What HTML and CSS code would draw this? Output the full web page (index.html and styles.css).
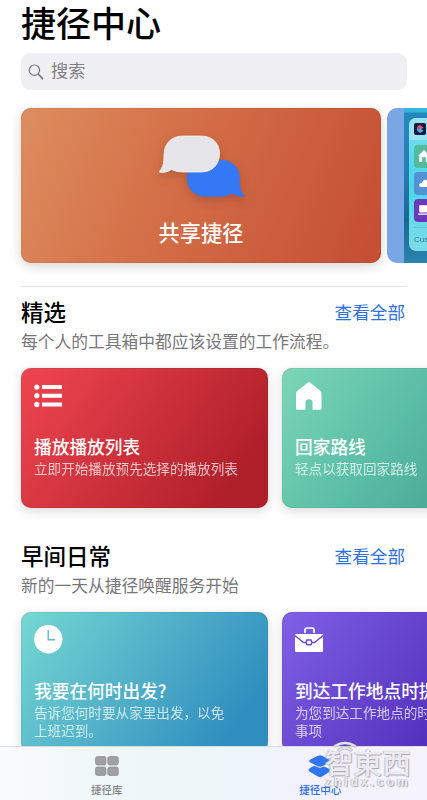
FILE: index.html
```html
<!DOCTYPE html>
<html lang="zh-CN">
<head>
<meta charset="utf-8">
<title>捷径中心</title>
<link rel="stylesheet" href="styles.css">
</head>
<body>
<div class="app">
  <main class="content">
    <h1 class="title">捷径中心</h1>
    <div class="search">
      <svg width="16" height="16" viewBox="0 0 16 16" fill="none" stroke="#77777b" stroke-width="1.2" stroke-linecap="round"><circle cx="6.4" cy="6.2" r="5.2"/><path d="M10.2 10 14.6 14.6" stroke-width="1.6"/></svg>
      <span>搜索</span>
    </div>

    <div class="heroes">
      <article class="hero">
        <svg class="bubbles" width="88" height="64" viewBox="0 0 88 64">
          <path d="M46 25H62C73 25 80.500 33 80.500 43C80.500 52 81 57 86 61.500C80 62 76 60 73.500 58.500Q67 61.500 61 61.500H47C36 61.500 28 54 28 43C28 32 36 25 46 25Z" fill="#3478f6" stroke="#5276c9" stroke-width=".7"/>
          <path d="M24 1H42C53 1 60.500 8 60.500 18.500C60.500 30 53 37 42 37H24Q17 37 12.500 34.500C9 37 4 38 0 37C4 32 5 29 5 20C5 8 13 1 24 1Z" fill="#e5e5ea" stroke="#fff3ee" stroke-width=".8"/>
        </svg>
        <h2 class="hero-label">共享捷径</h2>
      </article>
      <article class="preview">
        <div class="phone">
          <div class="widget">
            <div class="widget-head">
              <svg width="12" height="12" viewBox="0 0 12 12"><rect width="12" height="12" rx="2" fill="#141c48"/><path d="M5.500 2 9.500 4.500 7 6.500 3 4Z" fill="#ed5268"/><path d="M6.500 5.500 9.500 7.700 6 10 3 7.500Z" fill="#45b8d8"/><path d="M3 4 6 6 3 7.500Z" fill="#ac71df"/></svg>
            </div>
            <div class="tiles">
              <span class="tile green"><svg width="12" height="12" viewBox="0 0 10 10"><path d="M0 5 5 0 10 5H9V10H6.500V6H3.500V10H1V5Z" fill="#fff"/></svg></span>
              <span class="tile blue"><svg width="14" height="8" viewBox="0 0 12 8"><path d="M2 8Q0 8 0 6T3 4Q4 0 7 1T9.500 4Q12 4 12 8Z" fill="#fff"/></svg></span>
              <span class="tile purple"><svg width="12" height="12" viewBox="0 0 10 10"><path d="M1 1H8V6Q8 7 7 7H2Q1 7 1 6ZM0 8H9V9H0ZM8 2H10V5H8Z" fill="#fff"/></svg></span>
            </div>
            <span class="custom">Customize</span>
          </div>
        </div>
      </article>
    </div>

    <section class="section">
      <header class="heading"><h2>精选</h2><a>查看全部</a></header>
      <p class="subtitle">每个人的工具箱中都应该设置的工作流程。</p>
      <div class="cards">
        <article class="card red">
          <svg class="icon" width="30" height="30" viewBox="0 0 30 30" fill="#fff"><circle cx="2.800" cy="5" r="2.600"/><circle cx="2.800" cy="13.700" r="2.600"/><circle cx="2.800" cy="22.400" r="2.600"/><path d="M8 3H28V7H8ZM8 11.700H28V15.700H8ZM8 20.400H28V24.400H8Z"/></svg>
          <h3>播放播放列表</h3><p>立即开始播放预先选择的播放列表</p>
        </article>
        <article class="card teal">
          <svg class="icon" width="30" height="30" viewBox="0 0 30 30"><path d="M13 .5Q14 -.2 15 .5L25 8.500Q26.500 10 26.500 12V26.800Q26.500 27.800 25.500 27.800H17.500V20.500Q17.500 17.300 14 17.300T10.500 20.500V27.800H2Q1 27.800 1 26.800V12Q1 10 2.500 8.800Z" fill="#fff"/></svg>
          <h3>回家路线</h3><p>轻点以获取回家路线</p>
        </article>
      </div>
    </section>

    <section class="section last">
      <header class="heading"><h2>早间日常</h2><a>查看全部</a></header>
      <p class="subtitle">新的一天从捷径唤醒服务开始</p>
      <div class="cards">
        <article class="card cyan">
          <svg class="icon" width="30" height="30" viewBox="0 0 30 30"><circle cx="14.300" cy="13.300" r="14.200" fill="#fff"/><path d="M14.200 4.300V13.800H21" fill="none" stroke="#58bdc9" stroke-width="1.400"/></svg>
          <h3>我要在何时出发?</h3><p>告诉您何时要从家里出发，以免<br>上班迟到。</p>
        </article>
        <article class="card violet">
          <svg class="icon" width="30" height="30" viewBox="0 0 30 30"><path d="M10 7V4Q10 2 12 2H17Q19 2 19 4V7" fill="none" stroke="#fff" stroke-width="1.700"/><path d="M0 9Q0 8 1 8H27Q28 8 28 9V25Q28 26 27 26H1Q0 26 0 25Z" fill="#fff"/><path d="M0 9.500 8.500 16.500H19.500L28 9.500" fill="none" stroke="#6c4ad0" stroke-width="1.400"/><rect x="11.500" y="14" width="5" height="4.800" rx=".7" fill="#fff" stroke="#6c4ad0" stroke-width="1.400"/></svg>
          <h3>到达工作地点时提醒我</h3><p>为您到达工作地点的时间提醒<br>事项</p>
        </article>
      </div>
    </section>
  </main>

  <nav class="tabs">
    <a class="tab"><svg width="24" height="20" viewBox="0 0 24 20" fill="#a0a0a0" stroke="#8d8d8d" stroke-width=".7"><rect x=".5" y=".5" width="10.500" height="8.500" rx="2"/><rect x="12.800" y=".5" width="10.500" height="8.500" rx="2"/><rect x=".5" y="11" width="10.500" height="8.500" rx="2"/><rect x="12.800" y="11" width="10.500" height="8.500" rx="2"/></svg><span>捷径库</span></a>
    <a class="tab active"><svg width="24" height="24" viewBox="0 0 24 24" fill="#2f76f0"><path d="M11 10.500 22 15Q24 16 22 17.500L15 22Q12 24 9 22L1.500 17.500Q-.5 16 1.500 14.500L4.500 12.500Z"/><path d="M9.500 1.500Q12 .2 14.500 1.500L22 5.500Q24 7 22 8.500L15 12.500Q12 14 9 12.500L1.500 8.500Q-.5 7 1.500 5.500Z" stroke="#f2f3fd" stroke-width="1"/></svg><span>捷径中心</span></a>
  </nav>

  <div class="watermark">
    <svg width="24" height="12" viewBox="0 0 24 12" fill="none" stroke-linecap="round"><g stroke="#9c9ca8" stroke-width="3"><path d="M2 5Q12-1 22 5M6 9Q12 5 18 9"/></g><g stroke="#e9e7f2" stroke-width="2"><path d="M2 5Q12-1 22 5M6 9Q12 5 18 9"/></g></svg>
    <span class="mark-name">智東西</span>
    <span class="mark-url">zhidx.com</span>
  </div>
</div>
</body>
</html>
```
FILE: styles.css
```css
* { box-sizing: border-box; margin: 0; padding: 0; }
body {
  width: 427px; height: 800px; overflow: hidden; background: #fff;
  font-family: "Noto Sans CJK SC", "Noto Sans", sans-serif;
}
.app { position: relative; display: flex; flex-direction: column; height: 800px; overflow: hidden; }
.content { height: 746px; flex: none; padding-left: 21px; overflow: hidden; }
h1, h2, h3 { font-weight: 500; }
.title { height: 53px; font-size: 35px; line-height: 44px; white-space: nowrap; color: #000; }
.search {
  display: flex; align-items: center; gap: 7px; width: 386px; height: 37px; padding-left: 7px;
  border-radius: 9px; background: #f0f0f3; color: #808084; font-size: 17.2px; line-height: 33px;
}
.search span { height: 37px; }
.heroes { display: flex; gap: 6px; height: 178px; padding-top: 18px; }
.hero {
  display: flex; flex-direction: column; align-items: center; flex: none; width: 360px; height: 155px;
  padding-top: 27px; border-radius: 10px; color: #fff;
  background: linear-gradient(112deg, #dd8e60 0%, #d47049 40%, #c44d33 100%);
  box-shadow: 0 3px 12px rgba(0,0,0,.17), inset 0 0 1px rgba(130,45,25,.7);
}
.bubbles { flex: none; margin-left: 3px; overflow: visible; filter: drop-shadow(0 3px 5px rgba(80,35,20,.25)); }
.hero-label { margin-top: 18px; font-size: 21.200px; line-height: 30px; }
.preview {
  flex: none; width: 90px; height: 155px; padding-left: 17px; overflow: hidden;
  border-radius: 10px; background: #7aa6e6;
}
.phone { height: 155px; padding: 10px 0 0 5px; background: linear-gradient(180deg, #36b5da 0, #36b5da 4px, #2589bd 5px, #287db4 40%, #176994 72%, #2b84ad 100%); }
.widget { height: 133px; overflow: hidden; border-radius: 7px; background: linear-gradient(180deg, #78ddf1, #4bd7e8 50%, #7edce9); }
.widget-head { height: 22px; padding: 5px 0 0 5px; background: #9ae2f2; }
.widget-head svg { display: block; }
.tiles { display: grid; gap: 4.500px; padding: 5px 0 0 5px; }
.tile { display: flex; align-items: center; width: 60px; height: 22.500px; padding-left: 4px; border-radius: 4px; }
.green { background: #54b99d; }
.blue { background: #5291d3; }
.purple { background: #6938bd; }
.custom { display: block; margin: 5px 5px; border-top: 1px solid #65bfd3; padding-top: 6px; font: 8px/11px "Liberation Sans", sans-serif; color: #317d99; }
.section { width: 406px; height: 243.500px; }
.section::before { content: ""; display: block; width: 386px; height: 1px; margin-top: 18px; background: #e3e3e5; }
.section.last::before { background: transparent; }
.section.last { margin-top: -18px; }
.heading { display: flex; justify-content: space-between; align-items: center; width: 384px; height: 31px; margin-top: 9px; }
.heading h2 { font-size: 22.500px; line-height: 31px; color: #000; }
.heading a { font-size: 17.600px; line-height: 29px; color: #2d70e6; }
.subtitle { height: 26px; margin-top: 2px; font-size: 16.750px; line-height: 25px; color: #77777a; white-space: nowrap; }
.cards { display: flex; gap: 14px; margin-top: 13px; }
.card { flex: none; width: 247px; height: 140px; padding: 14px 13px; border-radius: 10px; color: #fff; box-shadow: 0 3px 12px rgba(0,0,0,.15), inset 0 0 1px rgba(0,0,0,.4); white-space: nowrap; }
.icon { display: block; height: 30px; margin-bottom: 21px; overflow: visible; }
.card h3 { font-size: 17.700px; line-height: 26px; }
.card p { font-size: 13.600px; line-height: 18.300px; opacity: .72; }
.red { background: linear-gradient(125deg, #ef4651, #b0202a 85%); }
.teal { background: linear-gradient(125deg, #7cd6b6, #5abda6 45%, #439e8e 90%); }
.cyan { background: linear-gradient(125deg, #76d7d2, #318fbf 85%); }
.violet { background: linear-gradient(125deg, #8060e6, #4926b3 85%); }
.tabs { display: flex; flex: none; height: 54px; border-top: 1px solid #d5dde3; background: linear-gradient(90deg, #fafbfc 0, #eff7f9 25%, #eef5fa 60%, #f3f1fc 72%, #f5f4fc 100%); }
.tab { display: flex; flex-direction: column; align-items: center; flex: 1; color: #858585; font-size: 10.500px; line-height: 16px; padding-top: 9px; }
.tab svg { flex: none; height: 20px; margin-bottom: 6px; }
.tab span { font-weight: 500; }
.tab.active { color: #2970e6; padding-top: 7px; }
.tab.active svg { height: 24px; margin-bottom: 4px; }
.watermark { position: absolute; left: 324px; top: 741px; width: 90px; height: 50px; color: #eceaf0; text-shadow: 1px 1px 1px #a7a7b0, -1px 0 1px #c2c2ca; }
.watermark svg { position: absolute; left: 9px; top: 0; }
.watermark span { position: absolute; left: 0; white-space: nowrap; }
.watermark .mark-name { top: 5px; left: 1px; font-size: 28.600px; line-height: 32px; font-weight: 500; }
.watermark .mark-url { top: 34px; left: 1px; font: bold 12px/15px "Liberation Sans", sans-serif; letter-spacing: 3px; }
```
